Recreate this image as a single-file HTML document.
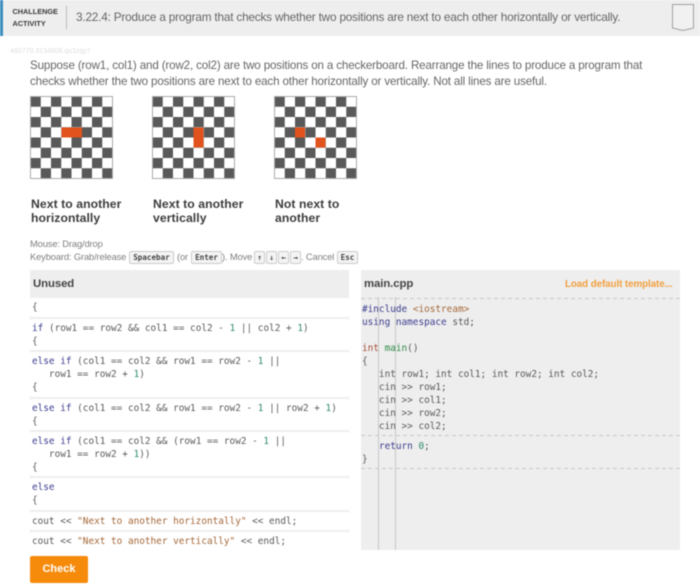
<!DOCTYPE html>
<html><head><meta charset="utf-8">
<style>
html,body{margin:0;padding:0;background:#fff}
#p{position:relative;width:700px;height:587px;overflow:hidden;font-family:"Liberation Sans",sans-serif;color:#555;filter:blur(.4px)}
.a{position:absolute;white-space:nowrap}
.cap{font-size:12.2px;line-height:14px;font-weight:bold;color:#3c3c3c;letter-spacing:.07px;font-family:"Liberation Sans",sans-serif}
.b{position:absolute;left:30px;width:319px;background:#fff;box-sizing:border-box;border-radius:2px}
pre{margin:0;position:absolute;font-family:"DejaVu Sans Mono",monospace;font-size:9.4px;line-height:13px;color:#5a5a5a}
.k{color:#3d3d8f}.n{color:#2f8a6a}.s{color:#a5683a}.f{color:#2e8b45}
.key{position:absolute;top:251px;height:11px;box-sizing:content-box;border:1px solid #ccc;border-radius:2px;background:#f4f4f4;font:bold 7.6px/11px "DejaVu Sans Mono",monospace;color:#444;text-align:center}
.t{font-size:9.4px;color:#808080;top:250px;line-height:13px;letter-spacing:-.15px}
.d{position:absolute;left:361px;width:319px;height:1px;background:repeating-linear-gradient(90deg,#c8c8c8 0 4px,transparent 4px 7px)}
</style></head><body>
<div id="p">
<div class="a" style="left:0;top:0;width:700px;height:36px;background:#eee"></div>
<div class="a" style="left:0;top:0;width:3px;height:36px;background:#3a8dbd"></div>
<div class="a" style="left:12.5px;top:6px;font-size:7.3px;line-height:11.5px;font-weight:bold;color:#3a3a3a">CHALLENGE<br>ACTIVITY</div>
<div class="a" style="left:66px;top:6px;width:1px;height:23px;background:#bbb"></div>
<div class="a" style="left:76px;top:10px;font-size:11.8px;line-height:15px;color:#666;letter-spacing:-.2px">3.22.4: Produce a program that checks whether two positions are next to each other horizontally or vertically.</div>
<svg class="a" style="left:670px;top:3px" width="26" height="29"><path d="M2.5 1.5H23.5V25L13 27.5L2.5 25Z" fill="#f1f1f1" stroke="#a0a0a0" stroke-width="1"/></svg>
<div class="a" style="left:10px;top:48px;font-size:7px;color:#dedede">460770.3134808.qx3zqy7</div>
<div class="a" style="left:30px;top:58px;font-size:11.6px;line-height:16px;color:#666;letter-spacing:-.145px">Suppose (row1, col1) and (row2, col2) are two positions on a checkerboard. Rearrange the lines to produce a program that<br>checks whether the two positions are next to each other horizontally or vertically. Not all lines are useful.</div>

<svg class="a" style="left:0;top:0" width="360" height="190">
<defs><pattern id="c" width="20.5" height="20.5" patternUnits="userSpaceOnUse"><rect width="20.5" height="20.5" fill="#fff"/><rect width="10.25" height="10.25" fill="#595959"/><rect x="10.25" y="10.25" width="10.25" height="10.25" fill="#595959"/></pattern></defs>
<g transform="translate(30.5,96.5)"><rect width="82" height="82" fill="url(#c)" stroke="#aaa" stroke-width="1"/><rect x="31" y="31" width="20.5" height="10" fill="#e2521d"/></g>
<g transform="translate(152.5,96.5)"><rect width="82" height="82" fill="url(#c)" stroke="#aaa" stroke-width="1"/><rect x="41" y="31" width="10" height="20" fill="#e2521d"/></g>
<g transform="translate(274.5,96.5)"><rect width="82" height="82" fill="url(#c)" stroke="#aaa" stroke-width="1"/><rect x="20.5" y="31" width="10" height="10" fill="#e2521d"/><rect x="41" y="41" width="10" height="10" fill="#e2521d"/></g>
</svg>

<div class="a cap" style="left:31px;top:197px">Next to another<br>horizontally</div>
<div class="a cap" style="left:153px;top:197px">Next to another<br>vertically</div>
<div class="a cap" style="left:275px;top:197px">Not next to<br>another</div>

<div class="a t" style="left:30px;top:237px">Mouse: Drag/drop</div>
<div class="a t" style="left:30px">Keyboard: Grab/release</div>
<div class="key" style="left:129px;width:43px">Spacebar</div>
<div class="a t" style="left:177px">(or</div>
<div class="key" style="left:191px;width:29px">Enter</div>
<div class="a t" style="left:222px">). Move</div>
<div class="key" style="left:254px;width:9px">↑</div>
<div class="key" style="left:266px;width:9px">↓</div>
<div class="key" style="left:278px;width:9px">←</div>
<div class="key" style="left:290px;width:9px">→</div>
<div class="a t" style="left:301px">. Cancel</div>
<div class="key" style="left:337px;width:19px">Esc</div>

<!-- Unused -->
<div class="a" style="left:30px;top:270px;width:319px;height:280px;background:#eee"></div>
<div class="a" style="left:33px;top:277px;font-size:11.4px;line-height:15px;font-weight:bold;color:#444;letter-spacing:-.1px">Unused</div>
<div class="b" style="top:298px;height:19px"></div>
<div class="b" style="top:319px;height:31px"></div>
<div class="b" style="top:352px;height:45px"></div>
<div class="b" style="top:399px;height:31px"></div>
<div class="b" style="top:432px;height:44px"></div>
<div class="b" style="top:478px;height:32px"></div>
<div class="b" style="top:512px;height:18px"></div>
<div class="b" style="top:532px;height:18px"></div>
<pre style="left:32px;top:301px">{</pre>
<pre style="left:32px;top:322px"><span class="k">if</span> (row1 == row2 &amp;&amp; col1 == col2 - <span class="n">1</span> || col2 + <span class="n">1</span>)
{</pre>
<pre style="left:32px;top:355px"><span class="k">else if</span> (col1 == col2 &amp;&amp; row1 == row2 - <span class="n">1</span> ||
   row1 == row2 + <span class="n">1</span>)
{</pre>
<pre style="left:32px;top:402px"><span class="k">else if</span> (col1 == col2 &amp;&amp; row1 == row2 - <span class="n">1</span> || row2 + <span class="n">1</span>)
{</pre>
<pre style="left:32px;top:435px"><span class="k">else if</span> (col1 == col2 &amp;&amp; (row1 == row2 - <span class="n">1</span> ||
   row1 == row2 + <span class="n">1</span>))
{</pre>
<pre style="left:32px;top:481px"><span class="k">else</span>
{</pre>
<pre style="left:32px;top:515px">cout &lt;&lt; <span class="s">"Next to another horizontally"</span> &lt;&lt; endl;</pre>
<pre style="left:32px;top:535px">cout &lt;&lt; <span class="s">"Next to another vertically"</span> &lt;&lt; endl;</pre>

<div class="a" style="left:30px;top:556px;width:58px;height:27px;background:#f58a0b;border-radius:2px;color:#fff;font-size:11px;font-weight:bold;line-height:26px;text-align:center">Check</div>

<!-- main.cpp -->
<div class="a" style="left:361px;top:270px;width:319px;height:280px;background:#eee"></div>
<div class="a" style="left:364px;top:277px;font-size:11.4px;line-height:15px;font-weight:bold;color:#444;letter-spacing:-.1px">main.cpp</div>
<div class="a" style="left:565px;top:278px;font-size:9.8px;line-height:13px;font-weight:bold;color:#f0a040;letter-spacing:-.08px">Load default template...</div>
<div class="d" style="top:298px"></div>
<div class="d" style="top:435px"></div>
<div class="d" style="top:468px"></div>
<div class="a" style="left:378px;top:297px;width:1px;height:253px;background:#c6c6c6"></div>
<div class="a" style="left:395px;top:297px;width:1px;height:253px;background:#c6c6c6"></div>
<pre style="left:362px;top:303px"><span class="k">#include</span> <span class="s">&lt;iostream&gt;</span>
<span class="k">using namespace</span> std;

<span class="s" style="color:#a5503a">int</span> <span class="f">main</span>()
{
   int row1; int col1; int row2; int col2;
   cin &gt;&gt; row1;
   cin &gt;&gt; col1;
   cin &gt;&gt; row2;
   cin &gt;&gt; col2;</pre>
<pre style="left:362px;top:440px">   <span class="k">return</span> <span class="n">0</span>;
}</pre>
</div>
</body></html>
